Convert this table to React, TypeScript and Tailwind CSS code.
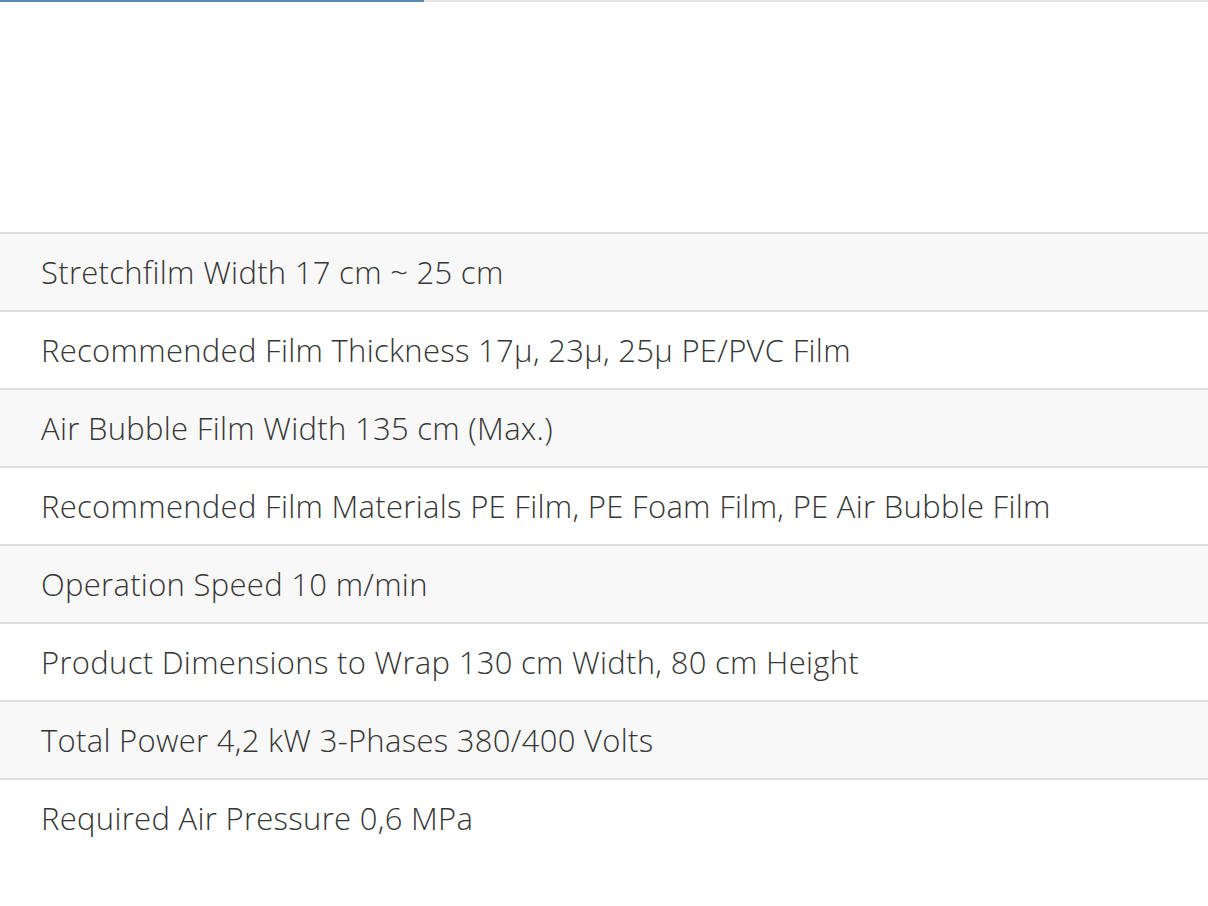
import React from "react";

const rows = [
  "Stretchfilm Width 17 cm ~ 25 cm",
  "Recommended Film Thickness 17µ, 23µ, 25µ PE/PVC Film",
  "Air Bubble Film Width 135 cm (Max.)",
  "Recommended Film Materials PE Film, PE Foam Film, PE Air Bubble Film",
  "Operation Speed 10 m/min",
  "Product Dimensions to Wrap 130 cm Width, 80 cm Height",
  "Total Power 4,2 kW 3-Phases 380/400 Volts",
  "Required Air Pressure 0,6 MPa",
];

export default function App() {
  return (
    <div className="w-[1208px] h-[906px] bg-white overflow-hidden" style={{ fontFamily: "'Open Sans', Lato, sans-serif" }}>
      <div className="flex h-[2px]">
        <div className="w-[424px] bg-[#5a89b2]" />
        <div className="flex-1 bg-[#e6e6e6]" />
      </div>
      <div className="h-[230px]" />
      <div className="flex flex-col">
        {rows.map((r, i) => (
          <div
            key={i}
            className={`h-[78px] border-t-2 border-[#dedede] flex items-center pl-[41px] text-[31px] tracking-[0.3px] font-light text-[#363636] ${i % 2 === 0 ? "bg-[#f8f8f8]" : "bg-white"}`}
          >
            {r}
          </div>
        ))}
      </div>
    </div>
  );
}
